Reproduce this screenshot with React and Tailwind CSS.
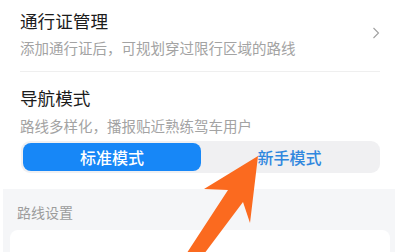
export default function App() {
  return (
    <div
      className="relative w-[400px] h-[252px] overflow-hidden bg-white"
      style={{ fontFamily: '"Noto Sans CJK SC", "Noto Sans", sans-serif' }}
    >
      <div className="flex items-center pl-5 pr-5">
        <div className="flex-1 pt-[9px] pb-[13px]">
          <div className="text-[17.6px] leading-[24px] text-[#1c1c1c]">通行证管理</div>
          <div className="mt-[5px] text-[14.5px] leading-[20px] text-[#a3a3a3]">添加通行证后，可规划穿过限行区域的路线</div>
        </div>
        <svg width="8" height="12" viewBox="0 0 8 12" className="mb-[5px]">
          <path d="M1.5 1 L6.5 6 L1.5 11" fill="none" stroke="#a0a0a0" strokeWidth="1.1" />
        </svg>
      </div>
      <div className="mx-5 h-px bg-[#efefef]" />
      <div className="px-5 pt-[14px] pb-[16px]">
        <div className="text-[17.6px] leading-[24px] text-[#1c1c1c]">导航模式</div>
        <div className="mt-[6px] text-[14.5px] leading-[20px] text-[#a3a3a3]">路线多样化，播报贴近熟练驾车用户</div>
        <div className="mt-[5px] ml-px flex h-[32px] rounded-[9px] bg-[#f0f0f2] p-[2px]">
          <div className="flex w-[178px] items-center justify-center rounded-[8px] bg-[#1787f7] text-[16px] font-medium text-white">标准模式</div>
          <div className="flex flex-1 items-center justify-center text-[16px] font-medium text-[#2f87de]">新手模式</div>
        </div>
      </div>
      <div className="ml-[3px] mr-[5px] bg-[#f5f6f8] pl-[7px] pr-[5px] pt-[13px] h-[80px]">
        <div className="pl-[7px] text-[14px] leading-[20px] text-[#9c9c9c]">路线设置</div>
        <div className="mt-[8px] h-[40px] rounded-[8px] bg-white" />
      </div>
      <svg className="absolute left-0 top-0" width="400" height="252" viewBox="0 0 400 252">
        <polygon
          points="258,156 204,189 228,190 181,262 198,262 243,202 250,223"
          fill="#fb6a1f"
        />
      </svg>
    </div>
  );
}
